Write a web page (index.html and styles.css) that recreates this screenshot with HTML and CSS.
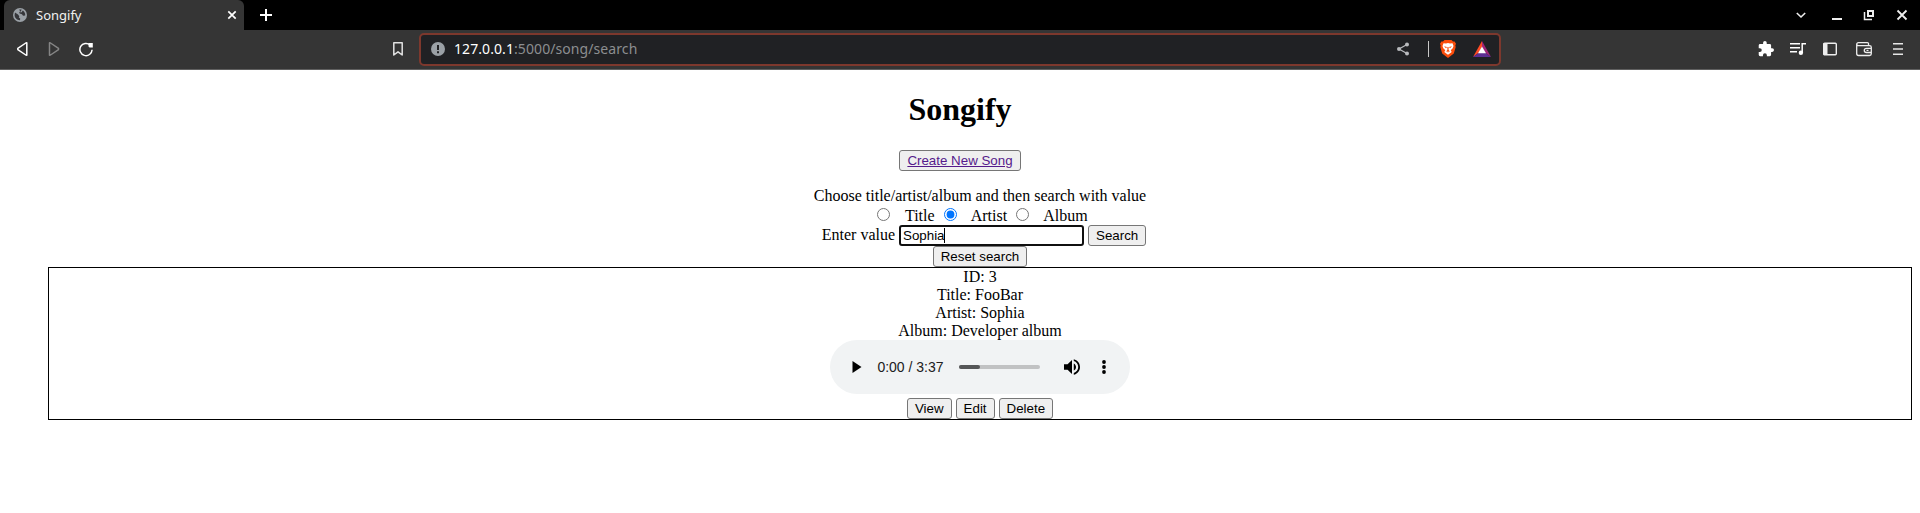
FILE: index.html
```html
<!DOCTYPE html>
<html lang="en">
<head>
<meta charset="utf-8">
<title>Songify</title>
<link rel="stylesheet" href="styles.css">
</head>
<body>
<header class="browser">
  <div class="tabstrip">
    <div class="tab">
      <svg class="globe" width="14" height="14" viewBox="0 0 14 14"><circle cx="7" cy="7" r="7" fill="#9aa0a6"/><path d="M2 4.6 5 6.4 6.3 8.2 5.8 9.4 7.2 10.4 7 12.2C3.700 12 1.600 9.800 1.600 7ZM6.200 1.600 8.600 1.600 8 3.200 6.200 4 6.600 5.600 9 6.200 10 7.800 12.200 7.600C12.500 5.400 11.500 3.500 9.800 2.400L8.600 4.200 7.600 4.600" fill="#35363a"/></svg>
      <span class="tab-title">Songify</span>
      <svg width="10" height="10" viewBox="0 0 10 10"><path d="M1.300 1.300 8.700 8.700M8.700 1.300 1.300 8.700" stroke="#fff" stroke-width="1.700"/></svg>
    </div>
    <svg class="plus" width="12" height="12" viewBox="0 0 12 12"><path d="M6 0V12M0 6H12" stroke="#fff" stroke-width="2"/></svg>
    <div class="window-controls">
      <svg width="12" height="12" viewBox="0 0 12 12"><path d="m1.800 4 4.200 4 4.200-4" fill="none" stroke="#eee" stroke-width="1.600"/></svg>
      <svg width="12" height="12" viewBox="0 0 12 12"><path d="M1 9H11V11H1Z" fill="#eee"/></svg>
      <svg class="restore" width="12" height="12" viewBox="0 0 12 12"><path d="M5 2H10V7H5Z" fill="none" stroke="#eee" stroke-width="2"/><path d="M1.500 3V10.500H9" fill="none" stroke="#eee" stroke-width="1.500"/></svg>
      <svg width="12" height="12" viewBox="0 0 12 12"><path d="m1.500 1.500 9 9M10.500 1.500l-9 9" stroke="#eee" stroke-width="1.800"/></svg>
    </div>
  </div>
  <div class="toolbar">
    <div class="nav">
      <svg width="16" height="16" viewBox="0 0 16 16"><path d="M12.800 1.800V14.200L11.800 14 3.800 8.600V7.400L11.800 2Z" fill="none" stroke="#fff" stroke-width="1.500" stroke-linejoin="round"/></svg>
      <svg width="16" height="16" viewBox="0 0 16 16"><path d="M3.500 1.800V14.200L4.500 14 12.500 8.600V7.400L4.500 2Z" fill="none" stroke="#858585" stroke-width="1.500" stroke-linejoin="round"/></svg>
      <svg width="16" height="16" viewBox="0 0 16 16"><path d="M12.200 4.100A6.100 6.100 0 1 0 14.100 8.800" fill="none" stroke="#fff" stroke-width="1.500"/><path d="M10.500 2H14.800V6.400H11.500L10.500 5.400Z" fill="#fff"/></svg>
    </div>
    <svg class="bookmark" width="16" height="16" viewBox="0 0 16 16"><path d="M3.800 1.800H12.200V14L8 10.800 3.800 14Z" fill="none" stroke="#e2e2e2" stroke-width="1.500" stroke-linejoin="round"/></svg>
    <div class="address">
      <svg class="info" width="14" height="14" viewBox="0 0 14 14"><circle cx="7" cy="7" r="7" fill="#9aa0a6"/><path d="M6 3H8V8H6ZM6 9.300H8V11.200H6Z" fill="#202124"/></svg>
      <span class="url"><b>127.0.0.1</b>:5000/song/search</span>
      <svg class="share" width="14" height="14" viewBox="0 0 14 14"><path d="M11 2.500 3 7 11 11.500" fill="none" stroke="#b8babd" stroke-width="1.300"/><circle cx="11" cy="2.500" r="2" fill="#b8babd"/><circle cx="3" cy="7" r="2" fill="#b8babd"/><circle cx="11" cy="11.500" r="2" fill="#b8babd"/></svg>
      <span class="divider"></span>
      <svg class="brave" width="16" height="18" viewBox="0 0 16 18"><path d="M4.500 0H11.500L13 1.600 14.600 1.500 16 3.700 15.300 5.500 15.700 7 13.800 13.500 8 18 2.200 13.500.300 7 .700 5.500 0 3.700 1.400 1.500 3 1.600Z" fill="#fb4d0b"/><path d="M3.500 3.300 6 3.500 8 3 10 3.500 12.500 3.300 13.500 6 12.700 8.300 10.700 10.200 11.700 12 8 14.800 4.300 12 5.300 10.200 3.300 8.300 2.500 6Z" fill="#fff"/><path d="m4 6.300 3 .600-1 1.300ZM12 6.300l-3 .600 1 1.300ZM7.400 7H8.600V10L9.500 10.500 8 11.500 6.500 10.500 7.400 10ZM5.500 11.800 8 11.200 10.500 11.800 8 12.300Z" fill="#fb4d0b"/></svg>
      <svg class="bat" width="18" height="16" viewBox="0 0 18 16"><path d="M9 0V6L5.500 12 0 16Z" fill="#ff4b24"/><path d="M9 0 18 16 12.500 12 9 6Z" fill="#a02577"/><path d="M0 16 5.500 12H12.500L18 16Z" fill="#5c2e91"/><path d="M9 5.500 13 12.300H5Z" fill="#fff"/></svg>
    </div>
    <div class="actions">
      <svg width="16" height="16" viewBox="1 1 22 22"><path fill="#fff" d="M20.500 11H19V7a2 2 0 0 0-2-2h-4V3.500a2.500 2.500 0 0 0-5 0V5H4a2 2 0 0 0-2 2v3.800h1.500a2.700 2.700 0 0 1 0 5.400H2V20a2 2 0 0 0 2 2h3.800v-1.500a2.700 2.700 0 0 1 5.400 0V22H17a2 2 0 0 0 2-2v-4h1.500a2.500 2.500 0 0 0 0-5Z"/></svg>
      <svg width="16" height="16" viewBox="0 0 16 16"><path d="M0 2.700H10M0 6.700H10M0 10.700H7M12.200 12V2.700H16" fill="none" stroke="#fff" stroke-width="1.500"/><circle cx="10.900" cy="11.800" r="2.200" fill="#fff"/></svg>
      <svg width="16" height="16" viewBox="0 0 16 16"><rect x="1.700" y="2.200" width="12.600" height="11.600" rx="1" fill="none" stroke="#eee" stroke-width="1.400"/><path d="M1.500 2H5.500V14H1.500Z" fill="#eee"/></svg>
      <svg class="wide" width="16" height="16" viewBox="0 0 16 16"><path d="M12.500 4.200V2.500Q12.500 1.700 11.500 1.700H2.500Q.700 1.700.700 3.500V12.500Q.700 14.500 2.500 14.500H13.500Q15.300 14.500 15.300 12.700V6.300Q15.300 4.600 13.500 4.600H2.500Q.700 4.600.700 3M15.300 7.300H10.500Q8.300 7.300 8.300 9.400T10.500 11.500H15.300" fill="none" stroke="#eee" stroke-width="1.300"/><path d="M10.500 8.800H12.500V10H10.500Z" fill="#eee"/></svg>
      <svg class="wide" width="16" height="16" viewBox="0 0 16 16"><path d="M3 2.800H13M3 8H13M3 13.200H13" stroke="#e6e6e6" stroke-width="1.600"/></svg>
    </div>
  </div>
</header>
<main class="page">
  <h1>Songify</h1>
  <button class="create"><a href="#">Create New Song</a></button>
  <ul class="content">
    <li class="prompt">Choose title/artist/album and then search with value</li>
    <li class="choices"><input type="radio" name="field"> &nbsp; Title <input type="radio" name="field" checked> &nbsp; Artist <input type="radio" name="field"> &nbsp; Album</li>
    <li class="search-row"><span>Enter value</span><span class="field"><input class="value" type="text" value="Sophia"><i class="caret"></i></span><button>Search</button></li>
    <li class="reset-row"><button>Reset search</button></li>
    <li class="song">
      <div>ID: 3</div>
      <div>Title: FooBar</div>
      <div>Artist: Sophia</div>
      <div>Album: Developer album</div>
      <div class="player">
        <svg class="play" width="10" height="12" viewBox="0 0 10 12"><path d="M.500 0 9.500 6 .500 12Z"/></svg>
        <span class="time">0:00 / 3:37</span>
        <span class="track"><span class="buffered"></span></span>
        <svg class="volume" width="16" height="16" viewBox="3 3 18 18"><path d="M3 9v6h4l5 5V4L7 9H3zm13.500 3c0-1.770-1.020-3.290-2.500-4.030v8.050c1.480-.730 2.500-2.250 2.500-4.020zM14 3.230v2.060c2.890.860 5 3.540 5 6.710s-2.110 5.850-5 6.710v2.060c4.010-.910 7-4.490 7-8.770s-2.990-7.860-7-8.770z"/></svg>
        <svg class="more" width="4" height="14" viewBox="0 0 4 14"><circle cx="2" cy="2" r="1.900"/><circle cx="2" cy="7" r="1.900"/><circle cx="2" cy="12" r="1.900"/></svg>
      </div>
      <div class="song-actions"><button>View</button><button>Edit</button><button>Delete</button></div>
    </li>
  </ul>
</main>
</body>
</html>
```
FILE: styles.css
```css
* { box-sizing: border-box; }
body { margin: 0; background: #fff; color: #000; font: 16px/18px "Liberation Serif", serif; }
svg { display: block; flex: none; }

.browser { height: 70px; font-family: "Noto Sans", sans-serif; }
.tabstrip { height: 30px; background: #000; display: flex; align-items: center; padding-left: 4px; }
.tab { width: 240px; height: 30px; background: #353535; border-radius: 6px 6px 0 0; display: flex; align-items: center; padding: 0 7px 0 9px; }
.tab-title { flex: 1; margin-left: 9px; color: #f1f1f1; font-size: 13px; }
.plus { margin-left: 16px; }
.window-controls { display: flex; align-items: center; margin-left: auto; padding-right: 12px; }
.window-controls svg + svg { margin-left: 24px; }
.window-controls .restore { margin-left: 20px; }
.window-controls .restore + svg { margin-left: 21px; }

.toolbar { height: 40px; background: #353535; border-bottom: 1px solid #606060; display: flex; align-items: center; padding: 0 14px 1px; }
.nav { display: flex; gap: 16px; }
.bookmark { margin-left: 296px; }
.address { width: 1082px; height: 33px; margin: 1px 0 0 13px; background: #202124; border: 2px solid #7d382d; border-radius: 5px; display: flex; align-items: center; padding: 0 8px 1px 10px; }
.url { flex: 1; margin-left: 9px; font-size: 14px; letter-spacing: .08px; color: #8c8e90; }
.url b { font-weight: 400; color: #fff; }
.divider { width: 1px; height: 16px; margin: 0 11px 0 18px; background: #c8c8c8; }
.bat { margin-left: 17px; }
.actions { display: flex; gap: 16px; margin-left: auto; }
.actions .wide { margin-left: 2px; }

.page { padding: 21px 8px 0; text-align: center; }
h1 { margin: 0; font-size: 32px; line-height: 37px; }
button { height: 21px; margin: 0; padding: 1px 7px; border: 1px solid #767676; border-radius: 3px; background: #efefef; color: #000; font: 13.333px/17px "Liberation Sans", Arial, sans-serif; }
.create { display: block; margin: 22px auto 0; }
.create a { color: #551a8b; }
.content { list-style: none; margin: 16px 0 0; padding: 0 0 0 40px; }
.prompt { height: 18px; }
.choices { height: 20px; line-height: 20px; }
.choices input { margin: 3px 3px 0 5px; }
.search-row { display: flex; justify-content: center; align-items: center; gap: 4px; height: 21px; padding-left: 8px; }
.search-row > span:first-child { margin-top: -1px; }
.field { position: relative; display: flex; }
.value { width: 185px; height: 21px; margin: 0; padding: 0 2px; border: 2px solid #101010; border-radius: 3px; background: #fff; color: #000; font: 13.333px/17px "Liberation Sans", Arial, sans-serif; outline: none; }
.caret { position: absolute; left: 45px; top: 3px; width: 1px; height: 15px; background: #000; }
.reset-row { display: flex; justify-content: center; height: 21px; }
.song { height: 153px; border: 1px solid #000; }
.player { width: 300px; height: 54px; margin: 0 auto; border-radius: 27px; background: #f1f3f4; display: flex; align-items: center; padding-left: 22px; }
.time { width: 67px; margin-left: 15px; font: 14px/18px "Liberation Sans", Arial, sans-serif; color: #202020; white-space: nowrap; }
.track { width: 81px; height: 4px; margin-left: 15px; border-radius: 2px; background: #c1c2c3; }
.buffered { display: block; width: 21px; height: 4px; border-radius: 2px; background: #555657; }
.volume { margin-left: 24px; }
.more { margin-left: 22px; }
.song-actions { display: flex; justify-content: center; gap: 4px; padding-top: 4px; }
```
